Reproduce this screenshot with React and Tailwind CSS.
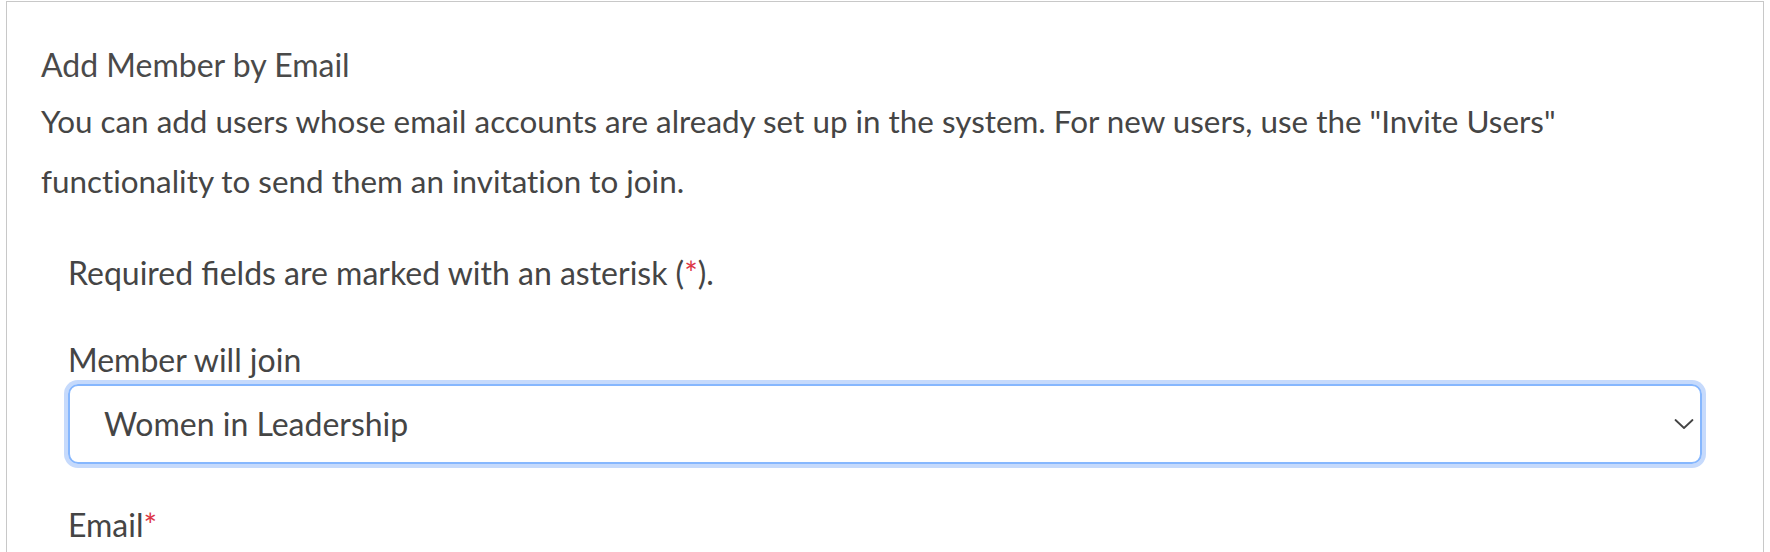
export default function App() {
  return (
    <div className="w-[1770px] h-[552px] overflow-hidden bg-white [font-variant-ligatures:none]" style={{ fontFamily: 'Lato, "Open Sans", sans-serif' }}>
      <div className="mt-[1px] mx-[6px] h-[700px] border border-[#c8c8c8] pl-[34px] pr-[34px] pt-[43px] text-[#454545]">
        <h2 className="text-[32px] leading-[40px] font-normal text-[#4a4a4a]">Add Member by Email</h2>
        <p className="mt-[6px] text-[31.4px] leading-[60px] w-[1545px]">
          You can add users whose email accounts are already set up in the system. For new users, use the "Invite Users" functionality to send them an invitation to join.
        </p>
        <div className="pl-[27px] pr-[27px]">
          <p className="mt-[42px] text-[32px] leading-[40px]">
            Required <span className="[font-variant-ligatures:common-ligatures]">fields</span> are marked with an asterisk (<span className="text-[#dc3545]">*</span>).
          </p>
          <label className="block mt-[47px] text-[32px] leading-[40px]">Member will join</label>
          <div className="mt-[4px] relative h-[80px] rounded-[10px] border-2 border-[#86b7fe] shadow-[0_0_0_4px_#c6dafc] flex items-center pl-[34px] text-[32px] text-[#454545]">
            <span>Women in Leadership</span>
            <svg className="absolute right-[6px] top-1/2 -translate-y-1/2" width="20" height="11" viewBox="0 0 20 11" fill="none">
              <path d="M1.5 1.5l8.5 8 8.5-8" stroke="#444" strokeWidth="1.8" strokeLinecap="round" strokeLinejoin="round" />
            </svg>
          </div>
          <label className="block mt-[41px] text-[32px] leading-[40px]">
            Email<span className="text-[#dc3545]">*</span>
          </label>
        </div>
      </div>
    </div>
  );
}
